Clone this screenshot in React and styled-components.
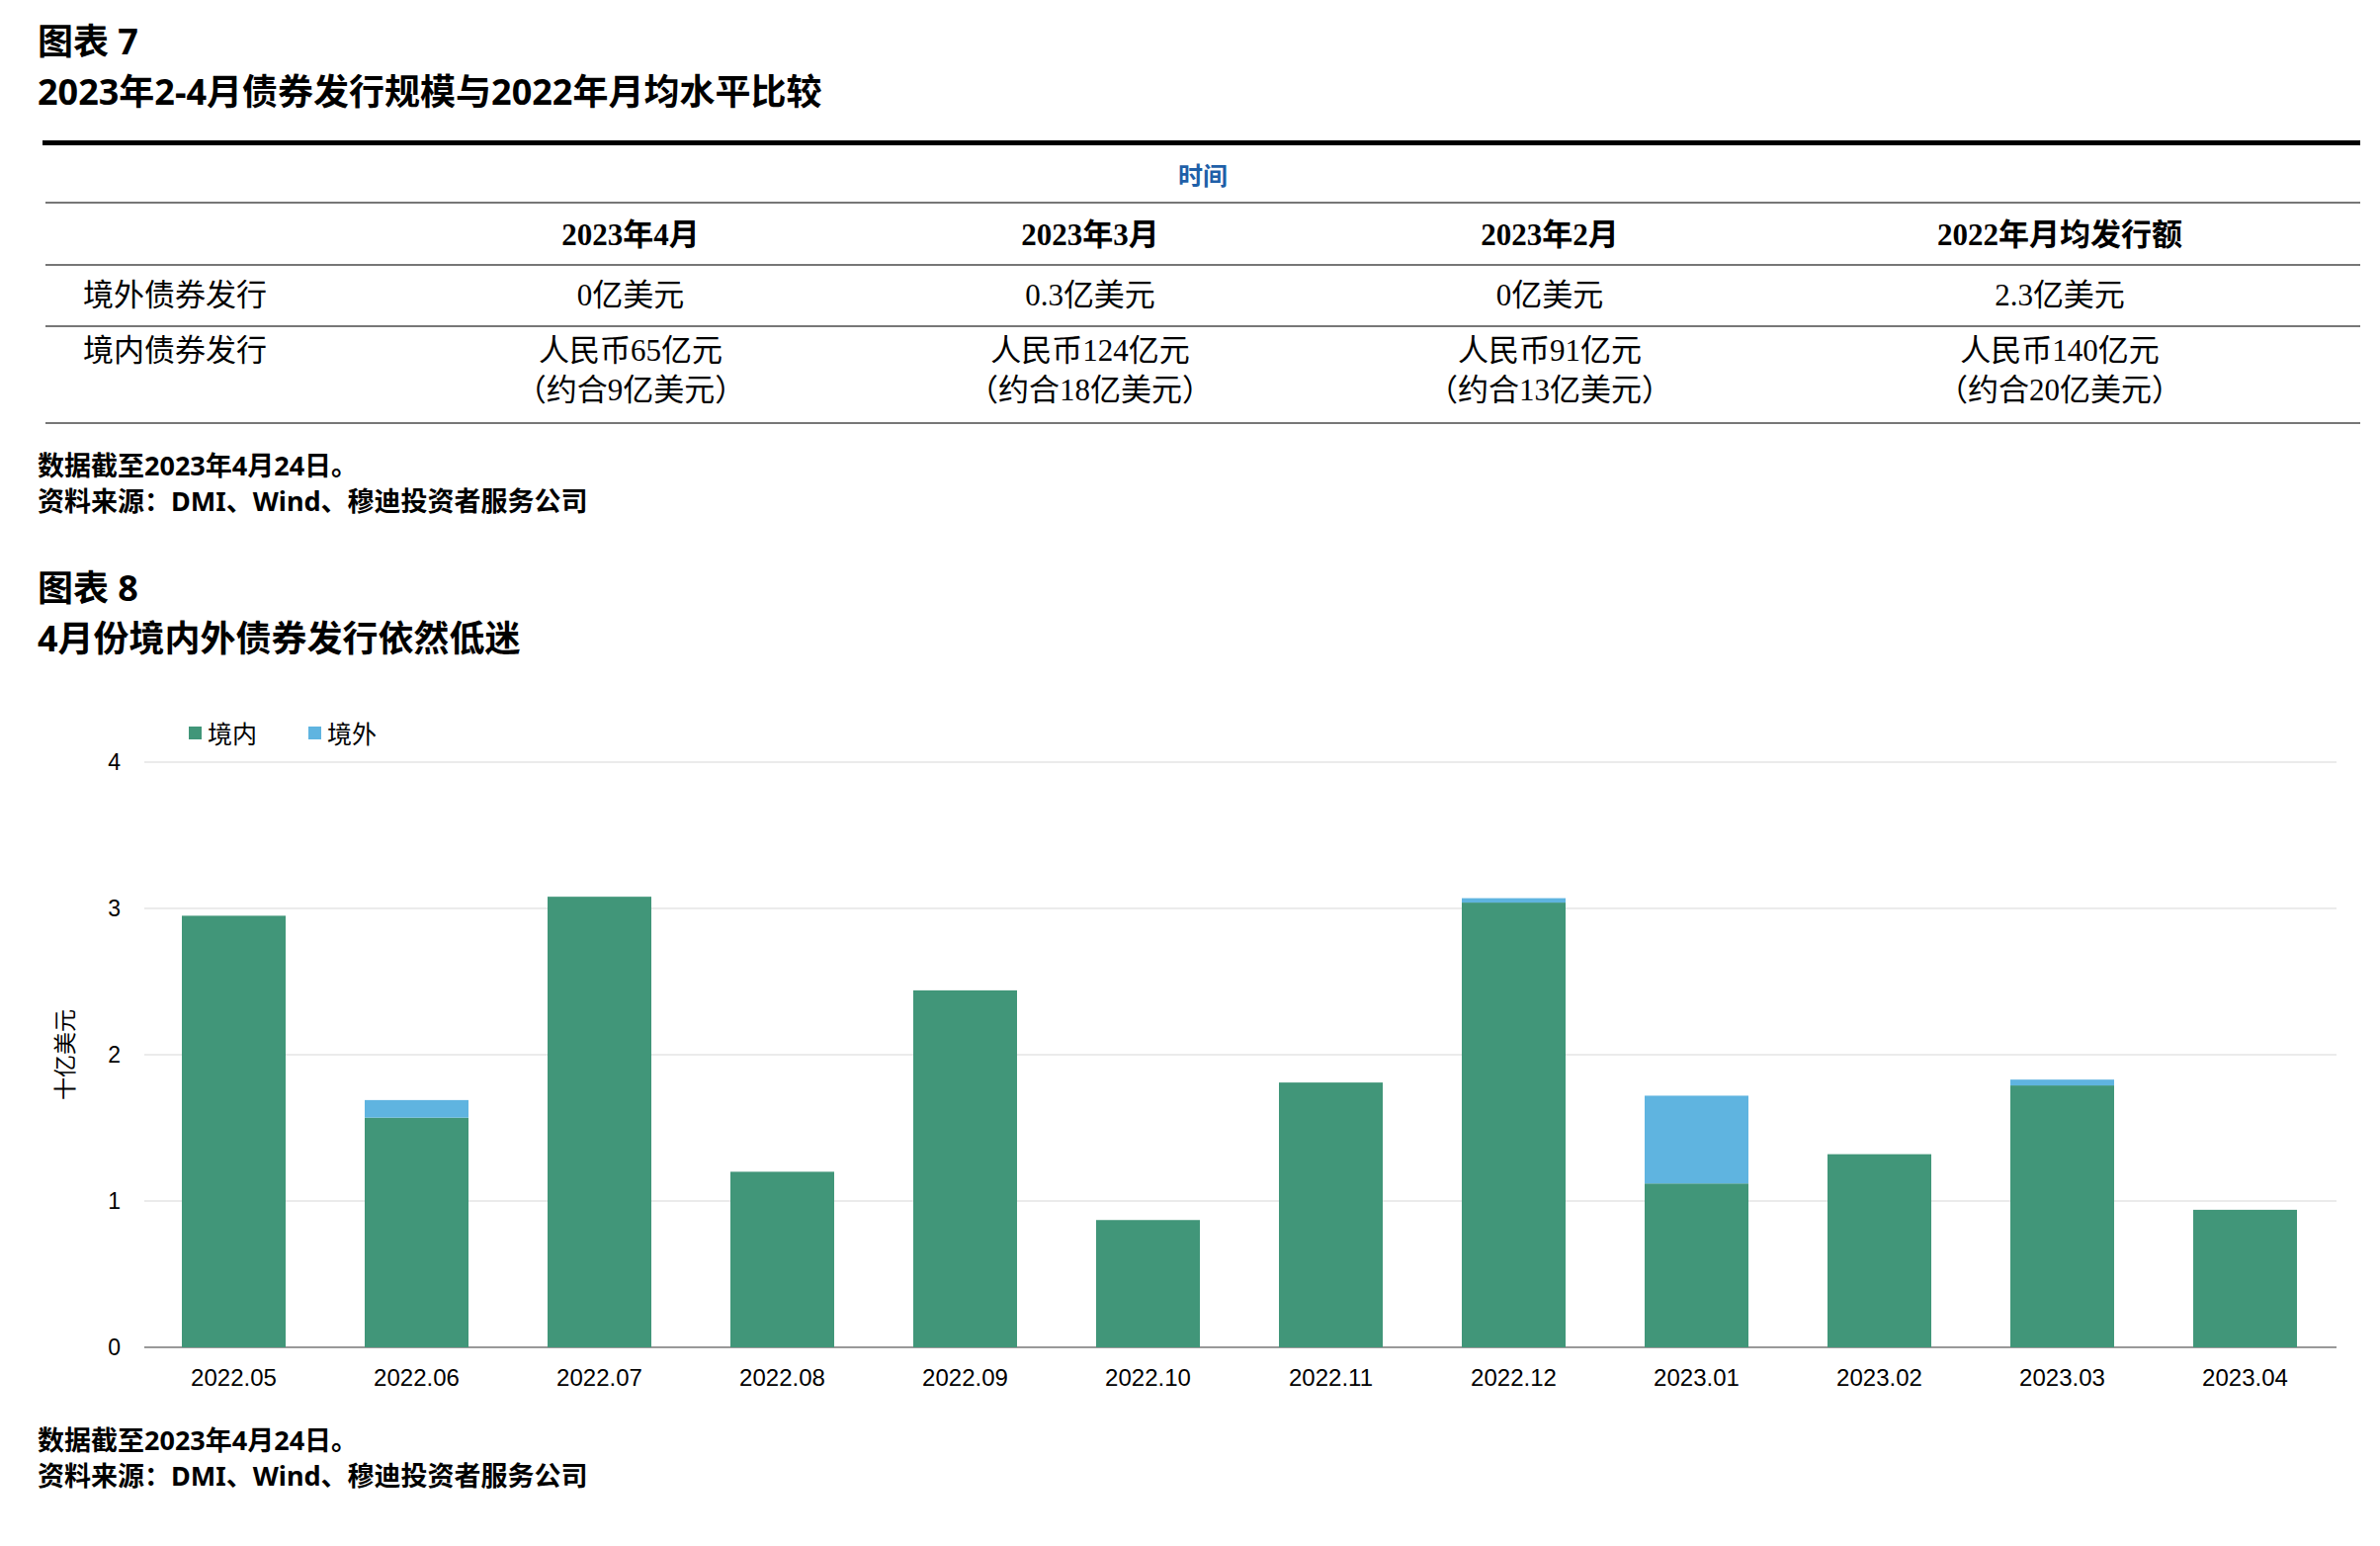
import styled, { createGlobalStyle } from 'styled-components';

const Global = createGlobalStyle`
  body {
    margin: 0;
    background: #fff;
    color: #000;
    font-family: "Noto Sans", "Noto Sans CJK SC", sans-serif;
  }
`;

const Page = styled.div`
  width: 2408px;
  padding: 16px 20px 0 38px;
  box-sizing: border-box;
`;

const Heading = styled.div`
  font-size: 36px;
  font-weight: 700;
  line-height: 51px;
  margin-top: ${p => p.$top || 0}px;
`;

const Table = styled.div`
  margin-top: 24px;
  margin-left: 5px;
  border-top: 5px solid #000;
`;

const TimeRow = styled.div`
  height: 57px;
  display: flex;
  align-items: center;
  justify-content: center;
  margin-left: 3px;
  border-bottom: 2px solid #777;
  color: #1f5fa8;
  font-weight: 700;
  font-size: 25px;
`;

const Row = styled.div`
  display: grid;
  grid-template-columns: 380px 464px 466px 464px 1fr;
  align-items: start;
  margin-left: 3px;
  height: ${p => p.$h}px;
  padding-top: ${p => p.$pt}px;
  box-sizing: border-box;
  border-bottom: 2px solid #777;
  font-family: "Liberation Serif", "Noto Sans CJK SC", serif;
  font-size: 31px;
  line-height: 40px;
  font-weight: ${p => (p.$head ? 600 : 400)};
`;

const Cell = styled.div`
  text-align: ${p => (p.$left ? 'left' : 'center')};
  padding-left: ${p => (p.$left ? '38px' : '0')};
  padding-right: ${p => (p.$left ? '0' : '40px')};
`;

const Notes = styled.div`
  margin-top: ${p => p.$top}px;
  font-size: 27px;
  font-weight: 700;
  line-height: 36px;
`;

const Legend = styled.div`
  display: flex;
  gap: 52px;
  margin: 52px 0 0 153px;
  font-family: "Liberation Serif", "Noto Sans CJK SC", serif;
  font-size: 25px;
`;

const LegendItem = styled.span`
  display: flex;
  align-items: center;
  gap: 6px;
  &::before {
    content: '';
    width: 13px;
    height: 13px;
    background: ${p => p.$c};
  }
`;

const GREEN = '#419679';
const BLUE = '#5fb4e0';

const data = [
  ['2022.05', 2.95, 0],
  ['2022.06', 1.57, 0.12],
  ['2022.07', 3.08, 0],
  ['2022.08', 1.2, 0],
  ['2022.09', 2.44, 0],
  ['2022.10', 0.87, 0],
  ['2022.11', 1.81, 0],
  ['2022.12', 3.04, 0.03],
  ['2023.01', 1.12, 0.6],
  ['2023.02', 1.32, 0],
  ['2023.03', 1.79, 0.04],
  ['2023.04', 0.94, 0],
];

const Chart = () => {
  const x0 = 108, y0 = 604, unit = 148, step = 185, bw = 105;
  return (
    <svg width="2350" height="660" viewBox="0 0 2350 660" style={{ display: 'block' }}>
      {[0, 1, 2, 3, 4].map(v => (
        <g key={v}>
          <line x1={x0} x2={2326} y1={y0 - v * unit} y2={y0 - v * unit} stroke={v ? '#e4e4e4' : '#999'} strokeWidth={v ? 1.5 : 2} />
          <text x={84} y={y0 - v * unit + 8} fontSize="23" fontFamily="Liberation Sans, sans-serif" textAnchor="end">{v}</text>
        </g>
      ))}
      <text transform={`translate(36 ${y0 - 2 * unit}) rotate(-90)`} fontSize="23" textAnchor="middle"
        fontFamily="Liberation Serif, Noto Sans CJK SC, serif">十亿美元</text>
      {data.map(([m, d, o], i) => {
        const cx = x0 + step * (i + 0.5) - 2;
        return (
          <g key={m}>
            <rect x={cx - bw / 2} y={y0 - d * unit} width={bw} height={d * unit} fill={GREEN} />
            {o > 0 && <rect x={cx - bw / 2} y={y0 - (d + o) * unit} width={bw} height={o * unit} fill={BLUE} />}
            <text x={cx} y={y0 + 39} fontSize="24" textAnchor="middle" fontFamily="Liberation Sans, sans-serif">{m}</text>
          </g>
        );
      })}
    </svg>
  );
};

const cols = [
  ['2023年4月', '0亿美元', '人民币65亿元', '（约合9亿美元）'],
  ['2023年3月', '0.3亿美元', '人民币124亿元', '（约合18亿美元）'],
  ['2023年2月', '0亿美元', '人民币91亿元', '（约合13亿美元）'],
  ['2022年月均发行额', '2.3亿美元', '人民币140亿元', '（约合20亿美元）'],
];

export default function App() {
  return (
    <Page>
      <Global />
      <Heading>图表 7</Heading>
      <Heading>2023年2-4月债券发行规模与2022年月均水平比较</Heading>
      <Table>
        <TimeRow>时间</TimeRow>
        <Row $head $h={63} $pt={12}>
          <Cell $left />
          {cols.map(c => <Cell key={c[0]}>{c[0]}</Cell>)}
        </Row>
        <Row $h={62} $pt={10}>
          <Cell $left>境外债券发行</Cell>
          {cols.map(c => <Cell key={c[0]}>{c[1]}</Cell>)}
        </Row>
        <Row $h={98} $pt={4}>
          <Cell $left>境内债券发行</Cell>
          {cols.map(c => <Cell key={c[0]}>{c[2]}<br />{c[3]}</Cell>)}
        </Row>
      </Table>
      <Notes $top={24}>数据截至2023年4月24日。<br />资料来源：DMI、Wind、穆迪投资者服务公司</Notes>
      <Heading $top={44}>图表 8</Heading>
      <Heading>4月份境内外债券发行依然低迷</Heading>
      <Legend>
        <LegendItem $c={GREEN}>境内</LegendItem>
        <LegendItem $c={BLUE}>境外</LegendItem>
      </Legend>
      <Chart />
      <Notes $top={20}>数据截至2023年4月24日。<br />资料来源：DMI、Wind、穆迪投资者服务公司</Notes>
    </Page>
  );
}
